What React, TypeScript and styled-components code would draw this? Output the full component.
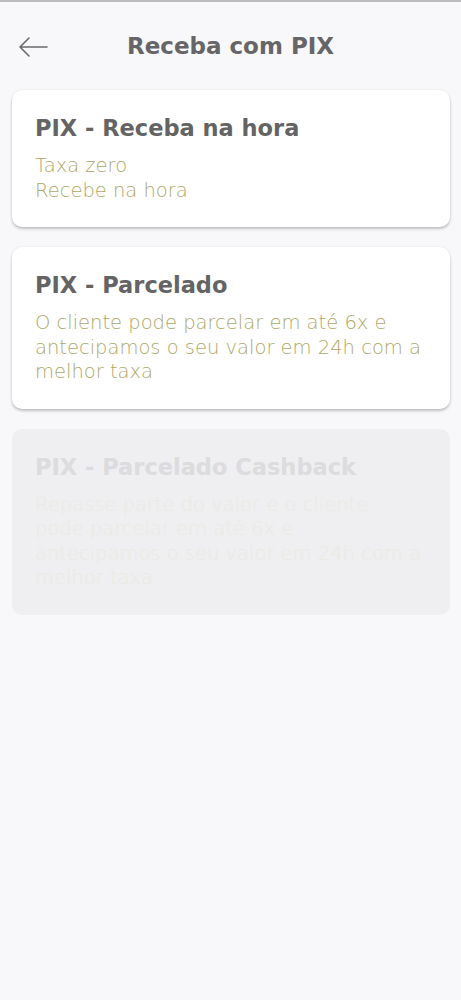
import React from "react";
import styled, { createGlobalStyle } from "styled-components";

const GlobalStyle = createGlobalStyle`
  html, body {
    margin: 0;
    padding: 0;
    background: #f8f7f9;
    font-family: "DejaVu Sans", "Noto Sans", sans-serif;
  }
`;

const Page = styled.div`
  min-height: 1000px;
  background: #f8f7f9;
  border-top: 2px solid #bdbcbe;
  box-sizing: border-box;
`;

const Header = styled.header`
  position: relative;
  display: flex;
  align-items: center;
  justify-content: center;
  height: 88px;
`;

const BackButton = styled.button`
  position: absolute;
  left: 14px;
  top: 30px;
  border: none;
  background: none;
  padding: 4px;
  display: flex;
  cursor: pointer;
`;

const Title = styled.h1`
  margin: 0;
  font-size: 23px;
  font-weight: 700;
  color: #666567;
`;

const List = styled.div`
  display: flex;
  flex-direction: column;
  gap: 20px;
  padding: 0 11px 0 12px;
`;

const Card = styled.div<{ $disabled?: boolean }>`
  background: ${(p) => (p.$disabled ? "#efeef0" : "#ffffff")};
  border-radius: 10px;
  padding: 24px 23px 24px;
  box-shadow: ${(p) =>
    p.$disabled ? "none" : "0 2px 3px rgba(0, 0, 0, 0.22), 0 0 2px rgba(0, 0, 0, 0.08)"};
`;

const CardTitle = styled.h2<{ $disabled?: boolean }>`
  margin: 0 0 12px;
  font-size: 22.5px;
  line-height: 28px;
  font-weight: 700;
  color: ${(p) => (p.$disabled ? "#dcdbdd" : "#646464")};
`;

const Description = styled.p<{ $disabled?: boolean }>`
  margin: 0;
  font-size: 19.5px;
  line-height: 24.5px;
  font-weight: 300;
  color: ${(p) => (p.$disabled ? "#ebeae3" : "#aca86a")};
`;

const Line = styled.span`
  display: block;
  white-space: nowrap;
`;

const options = [
  {
    title: "PIX - Receba na hora",
    lines: ["Taxa zero", "Recebe na hora"],
  },
  {
    title: "PIX - Parcelado",
    lines: ["O cliente pode parcelar em até 6x e", "antecipamos o seu valor em 24h com a", "melhor taxa"],
  },
  {
    title: "PIX - Parcelado Cashback",
    lines: [
      "Repasse parte do valor e o cliente",
      "pode parcelar em até 6x e",
      "antecipamos o seu valor em 24h com a",
      "melhor taxa",
    ],
    disabled: true,
  },
];

export default function App() {
  return (
    <Page>
      <GlobalStyle />
      <Header>
        <BackButton aria-label="Voltar">
          <svg width="30" height="22" viewBox="0 0 30 22" fill="none">
            <path d="M29 11H2M11 2L2 11l9 9" stroke="#6b6a6c" strokeWidth="1.6" strokeLinecap="round" strokeLinejoin="round" />
          </svg>
        </BackButton>
        <Title>Receba com PIX</Title>
      </Header>
      <List>
        {options.map((o) => (
          <Card key={o.title} $disabled={o.disabled}>
            <CardTitle $disabled={o.disabled}>{o.title}</CardTitle>
            <Description $disabled={o.disabled}>
              {o.lines.map((l) => (
                <Line key={l}>{l}</Line>
              ))}
            </Description>
          </Card>
        ))}
      </List>
    </Page>
  );
}
